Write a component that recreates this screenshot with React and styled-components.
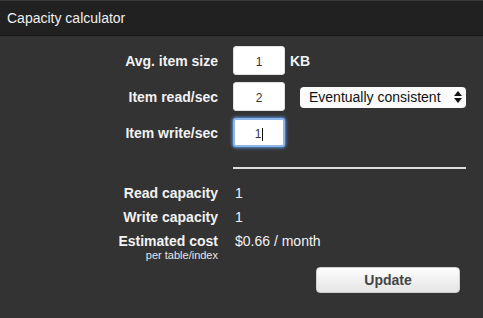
import styled, { createGlobalStyle } from 'styled-components'

const GlobalStyle = createGlobalStyle`
	html, body {
		margin: 0;
		background: #333333;
		font-family: 'Liberation Sans', Arial, sans-serif;
	}
`

const Panel = styled.div`
	width: 483px;
	height: 318px;
	background: #333333;
	border-top: 1px solid #3a3a3a;
	box-sizing: border-box;
`

const Header = styled.div`
	height: 35px;
	background: #212121;
	border-bottom: 1px solid #161616;
	color: #f0f0f0;
	font-size: 14px;
	display: flex;
	align-items: center;
	padding-left: 7px;
	box-sizing: border-box;
`

const Form = styled.div`
	display: grid;
	grid-template-columns: 218px 1fr;
	column-gap: 15px;
	row-gap: 7px;
	padding-top: 10px;
	align-items: center;
`

const Label = styled.div`
	text-align: right;
	color: #f2f2f2;
	font-weight: bold;
	font-size: 14px;
	line-height: 16px;
`

const SubLabel = styled.div`
	font-weight: normal;
	font-size: 11px;
	line-height: 13px;
	color: #e6e6e6;
`

const Field = styled.div`
	display: flex;
	align-items: center;
	gap: ${(p) => p.$gap || 5}px;
	color: #f2f2f2;
	font-size: 14px;
	font-weight: bold;
`

const Input = styled.div`
	width: 52px;
	height: 29px;
	box-sizing: border-box;
	background: #ffffff;
	border-radius: 3px;
	border: ${(p) => (p.$focus ? '2px solid #8fb6e8' : '1px solid #e0e0e0')};
	box-shadow: ${(p) => (p.$focus ? '0 0 3px 1px #5a8fd6' : 'none')};
	display: flex;
	align-items: center;
	justify-content: center;
	color: #333;
	font-size: 12px;
	font-weight: normal;
	padding-top: 3px;
`

const Caret = styled.span`
	display: inline-block;
	width: 1px;
	height: 13px;
	background: #111;
	margin-left: 1px;
`

const Select = styled.div`
	height: 21px;
	width: 166px;
	box-sizing: border-box;
	background: #fbfbfb;
	border-radius: 4px;
	display: flex;
	align-items: center;
	justify-content: space-between;
	padding: 0 4px 0 9px;
	color: #111;
	font-size: 14px;
	font-weight: normal;
	margin-top: 1px;
`

const Separator = styled.div`
	grid-column: 2;
	width: 233px;
	height: 2px;
	background: #dedede;
	margin: 13px 0 16px;
`

const ResultGrid = styled.div`
	display: grid;
	grid-template-columns: 218px 1fr;
	column-gap: 17px;
	row-gap: 8px;
	align-items: start;
`

const Value = styled.div`
	color: #f2f2f2;
	font-size: 14px;
	line-height: 16px;
`

const Footer = styled.div`
	display: flex;
	justify-content: flex-end;
	padding: 5px 23px 0 0;
`

const Button = styled.div`
	width: 144px;
	height: 26px;
	box-sizing: border-box;
	border-radius: 4px;
	background: linear-gradient(#fdfdfd, #e4e4e4);
	border: 1px solid #d0d0d0;
	color: #444;
	font-weight: bold;
	font-size: 14px;
	display: flex;
	align-items: center;
	justify-content: center;
`

const Arrows = () => (
	<svg width="8" height="12" viewBox="0 0 8 12">
		<path d="M4 0 L8 5 H0 Z" fill="#111" />
		<path d="M4 12 L8 7 H0 Z" fill="#111" />
	</svg>
)

const App = () => {
	return (
		<Panel>
			<GlobalStyle />
			<Header>Capacity calculator</Header>
			<Form>
				<Label>Avg. item size</Label>
				<Field>
					<Input>1</Input>
					KB
				</Field>
				<Label>Item read/sec</Label>
				<Field $gap={15}>
					<Input>2</Input>
					<Select>
						Eventually consistent
						<Arrows />
					</Select>
				</Field>
				<Label>Item write/sec</Label>
				<Field>
					<Input $focus>
						1<Caret />
					</Input>
				</Field>
				<Separator />
			</Form>
			<ResultGrid>
				<Label>Read capacity</Label>
				<Value>1</Value>
				<Label>Write capacity</Label>
				<Value>1</Value>
				<Label>
					Estimated cost
					<SubLabel>per table/index</SubLabel>
				</Label>
				<Value>$0.66 / month</Value>
			</ResultGrid>
			<Footer>
				<Button>Update</Button>
			</Footer>
		</Panel>
	)
}

export default App
